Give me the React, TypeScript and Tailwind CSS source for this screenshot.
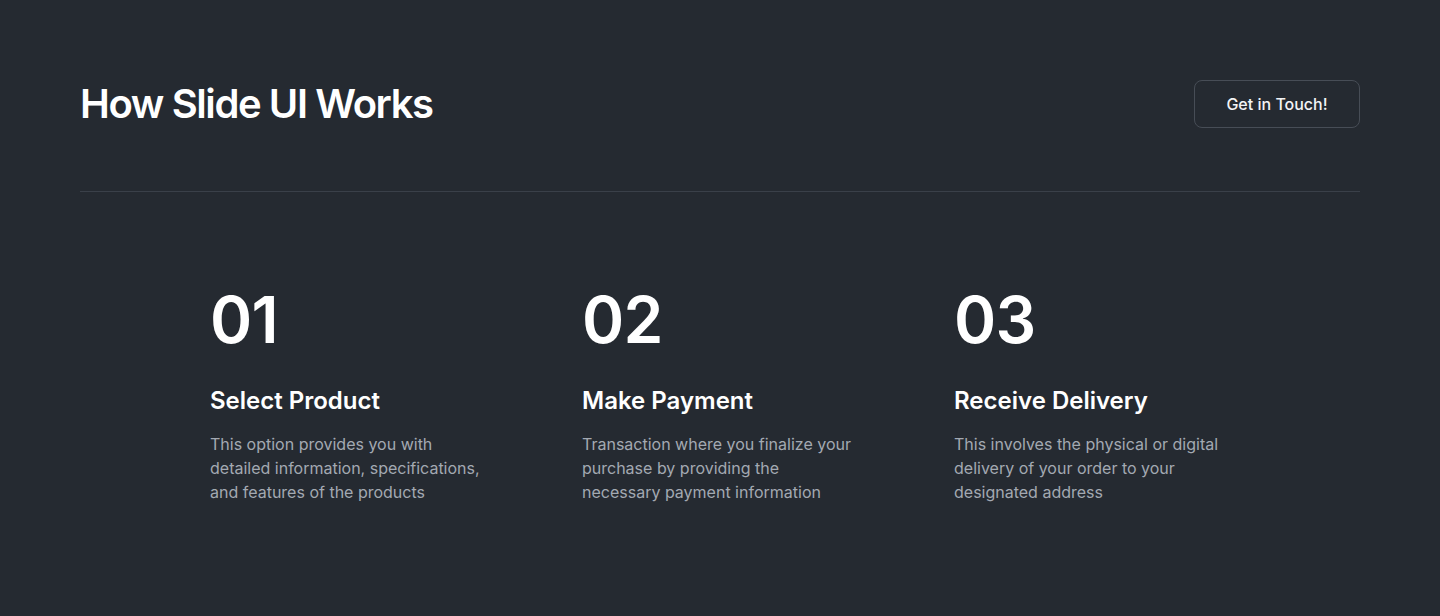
const steps = [
  {
    num: '01',
    title: 'Select Product',
    body: 'This option provides you with detailed information, specifications, and features of the products',
  },
  {
    num: '02',
    title: 'Make Payment',
    body: 'Transaction where you finalize your purchase by providing the necessary payment information',
  },
  {
    num: '03',
    title: 'Receive Delivery',
    body: 'This involves the physical or digital delivery of your order to your designated address',
  },
];

export default function App() {
  return (
    <div className="min-h-[616px] w-full bg-[#252a31] font-['Inter',sans-serif] text-white">
      <div className="px-20 pt-20">
        <div className="flex items-center justify-between">
          <h1 className="text-[40px] font-semibold leading-[48px] tracking-[-0.035em]">How Slide UI Works</h1>
          <button className="h-12 w-[166px] rounded-lg border border-[#474d56] text-base font-medium text-[#f3f4f6]">
            Get in Touch!
          </button>
        </div>

        <div className="mt-[63px] h-px bg-[#3a4049]" />

        <div className="grid grid-cols-3 pl-[130px] pr-[34px] pt-24">
          {steps.map((s) => (
            <div key={s.num} className="flex flex-col">
              <span className="text-[64px] font-semibold leading-[64px] tracking-[-0.01em]">{s.num}</span>
              <h3 className="mt-[33px] text-2xl font-semibold leading-8">{s.title}</h3>
              <p className="mt-[15px] w-[274px] text-base leading-6 text-[#a3a9b2]">{s.body}</p>
            </div>
          ))}
        </div>
      </div>
    </div>
  );
}
